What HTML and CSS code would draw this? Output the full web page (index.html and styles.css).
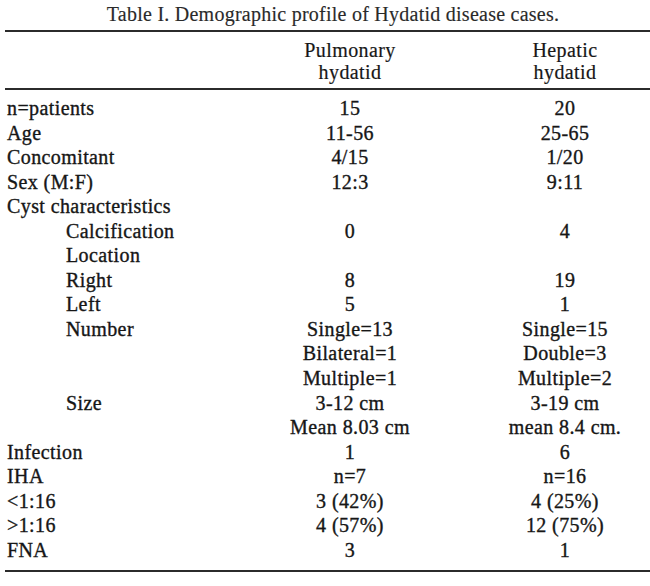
FILE: index.html
```html
<!DOCTYPE html>
<html>
<head>
<meta charset="utf-8">
<link rel="stylesheet" href="styles.css">
</head>
<body>
<div class="page">
  <p class="caption">Table I. Demographic profile of Hydatid disease cases.</p>
  <table class="profile">
    <colgroup><col class="c-label"><col class="c-pul"><col class="c-hep"></colgroup>
    <thead>
      <tr>
        <th></th>
        <th>Pulmonary<br>hydatid</th>
        <th class="hep">Hepatic<br>hydatid</th>
      </tr>
    </thead>
    <tbody>
      <tr class="first"><td class="lab">n=patients</td><td>15</td><td class="hep">20</td></tr>
      <tr><td class="lab">Age</td><td>11-56</td><td class="hep">25-65</td></tr>
      <tr><td class="lab">Concomitant</td><td>4/15</td><td class="hep">1/20</td></tr>
      <tr><td class="lab">Sex (M:F)</td><td>12:3</td><td class="hep">9:11</td></tr>
      <tr><td class="lab">Cyst characteristics</td><td></td><td class="hep"></td></tr>
      <tr><td class="lab sub">Calcification</td><td>0</td><td class="hep">4</td></tr>
      <tr><td class="lab sub">Location</td><td></td><td class="hep"></td></tr>
      <tr><td class="lab sub">Right</td><td>8</td><td class="hep">19</td></tr>
      <tr><td class="lab sub">Left</td><td>5</td><td class="hep">1</td></tr>
      <tr><td class="lab sub">Number</td><td>Single=13</td><td class="hep">Single=15</td></tr>
      <tr><td class="lab"></td><td>Bilateral=1</td><td class="hep">Double=3</td></tr>
      <tr><td class="lab"></td><td>Multiple=1</td><td class="hep">Multiple=2</td></tr>
      <tr><td class="lab sub">Size</td><td>3-12 cm</td><td class="hep">3-19 cm</td></tr>
      <tr><td class="lab"></td><td>Mean 8.03 cm</td><td class="hep">mean 8.4 cm.</td></tr>
      <tr><td class="lab">Infection</td><td>1</td><td class="hep">6</td></tr>
      <tr><td class="lab">IHA</td><td>n=7</td><td class="hep">n=16</td></tr>
      <tr><td class="lab">&lt;1:16</td><td>3 (42%)</td><td class="hep">4 (25%)</td></tr>
      <tr><td class="lab">&gt;1:16</td><td>4 (57%)</td><td class="hep">12 (75%)</td></tr>
      <tr class="last"><td class="lab">FNA</td><td>3</td><td class="hep">1</td></tr>
    </tbody>
  </table>
</div>
</body>
</html>
```
FILE: styles.css
```css
html, body {
  margin: 0;
  padding: 0;
  background: #ffffff;
  overflow: hidden;
}
.page {
  width: 650px;
  height: 586px;
  font-family: "Liberation Serif", "Times New Roman", serif;
  font-size: 20px;
  color: #161616;
}
.caption {
  margin: 0;
  padding: 2px 0 0 16px;
  line-height: 24px;
  text-align: center;
  letter-spacing: 0.25px;
  color: #2a2a2a;
  -webkit-text-stroke: 0.15px #2a2a2a;
}
.profile {
  margin: 4px 0 0 5px;
  width: 645px;
  table-layout: fixed;
  border-collapse: collapse;
  border-top: 2px solid #2b2b2b;
  border-bottom: 2px solid #2b2b2b;
  letter-spacing: 0.4px;
  -webkit-text-stroke: 0.35px #161616;
}
.c-label { width: 245px; }
.c-pul { width: 200px; }
.c-hep { width: 200px; }
.profile th {
  font-weight: normal;
  line-height: 22px;
  padding: 7px 0 5px;
  text-align: center;
  border-bottom: 2px solid #2b2b2b;
  -webkit-text-stroke: 0.2px #222;
}
.profile td {
  padding: 0;
  line-height: 24.55px;
  height: 24.55px;
  text-align: center;
  white-space: nowrap;
}
.profile th.hep, .profile td.hep {
  padding-left: 30px;
}
.profile td.lab {
  text-align: left;
  padding-left: 2px;
}
.profile td.lab.sub {
  padding-left: 61px;
}
.profile tr.first td { padding-top: 6px; }
.profile tr.last td { padding-bottom: 8px; }
```
